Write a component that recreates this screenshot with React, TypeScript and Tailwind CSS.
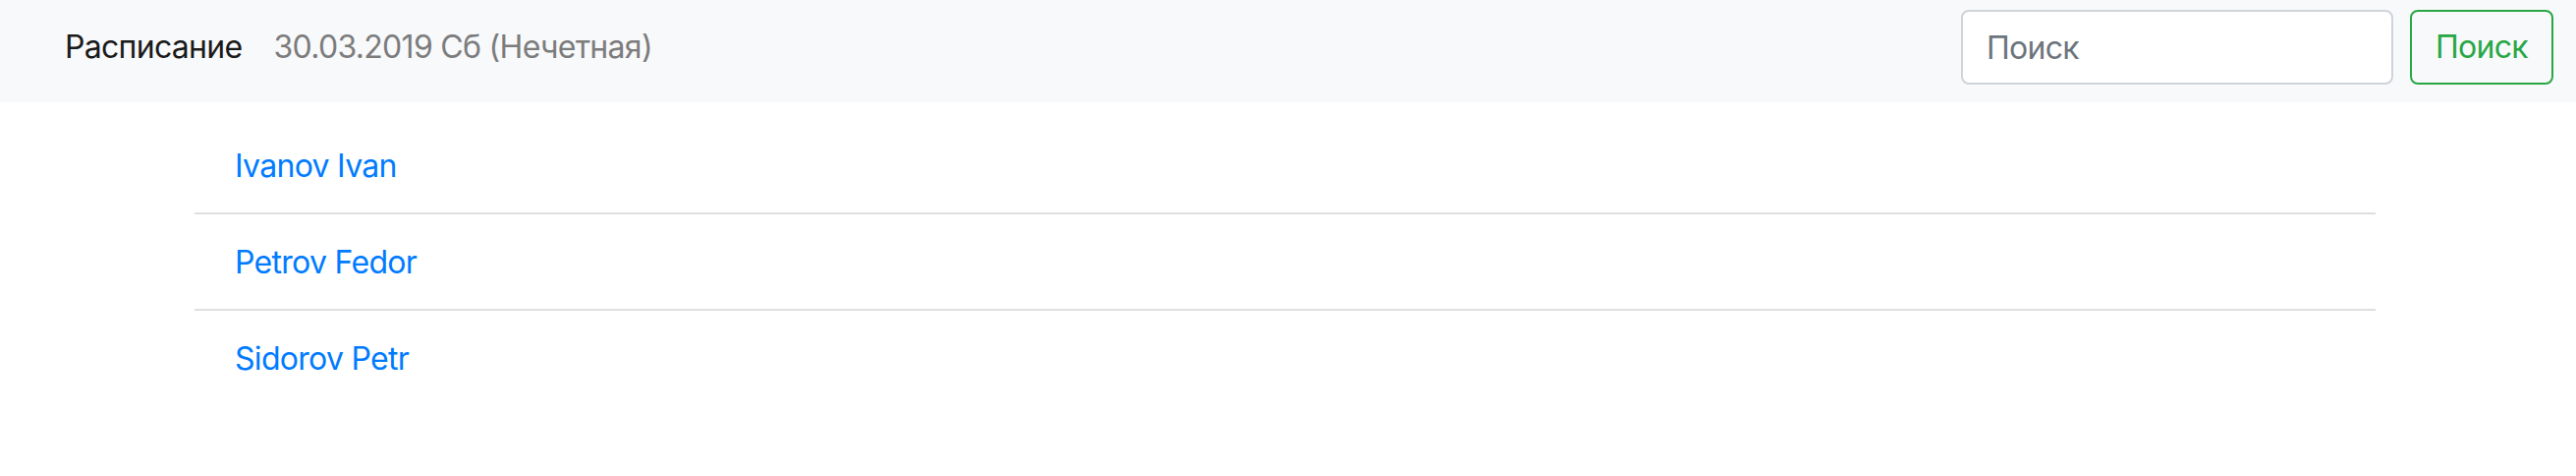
export default function App() {
  const people = ["Ivanov Ivan", "Petrov Fedor", "Sidorov Petr"];

  return (
    <div className="min-h-[484px] bg-white font-['Inter','Noto_Sans',sans-serif] text-[32px] leading-[48px] tracking-[-0.7px]">
      {/* Navbar */}
      <nav className="h-[104px] bg-[#f8f9fa] flex items-start justify-between pl-[66px] pr-[23px]">
        <div className="flex items-baseline pt-[24px]">
          <span className="text-[#1a1a1a] mr-[32px]">Расписание</span>
          <span className="text-[#7c7c7d]">30.03.2019 Сб (Нечетная)</span>
        </div>
        <form className="flex items-start pt-[10px] gap-[17px]">
          <input
            type="text"
            placeholder="Поиск"
            className="w-[440px] h-[76px] bg-white border-2 border-[#ced4da] rounded-[8px] px-[24px] text-[32px] tracking-[-0.7px] text-[#495057] placeholder:text-[#6c757d] outline-none"
          />
          <button
            type="button"
            className="w-[146px] h-[76px] border-2 border-[#28a745] rounded-[8px] text-[#28a745] text-[32px] flex items-center justify-center"
          >
            Поиск
          </button>
        </form>
      </nav>

      {/* List */}
      <div className="mt-[16px] ml-[198px] w-[2220px]">
        <ul>
          {people.map((name, i) => (
            <li
              key={name}
              className={
                i < people.length - 1
                  ? "px-[41px] pt-[25px] pb-[23px] border-b-2 border-[#dfdfdf]"
                  : "px-[41px] pt-[25px] pb-[23px]"
              }
            >
              <a href="#" className="text-[#007bff]">
                {name}
              </a>
            </li>
          ))}
        </ul>
      </div>
    </div>
  );
}
